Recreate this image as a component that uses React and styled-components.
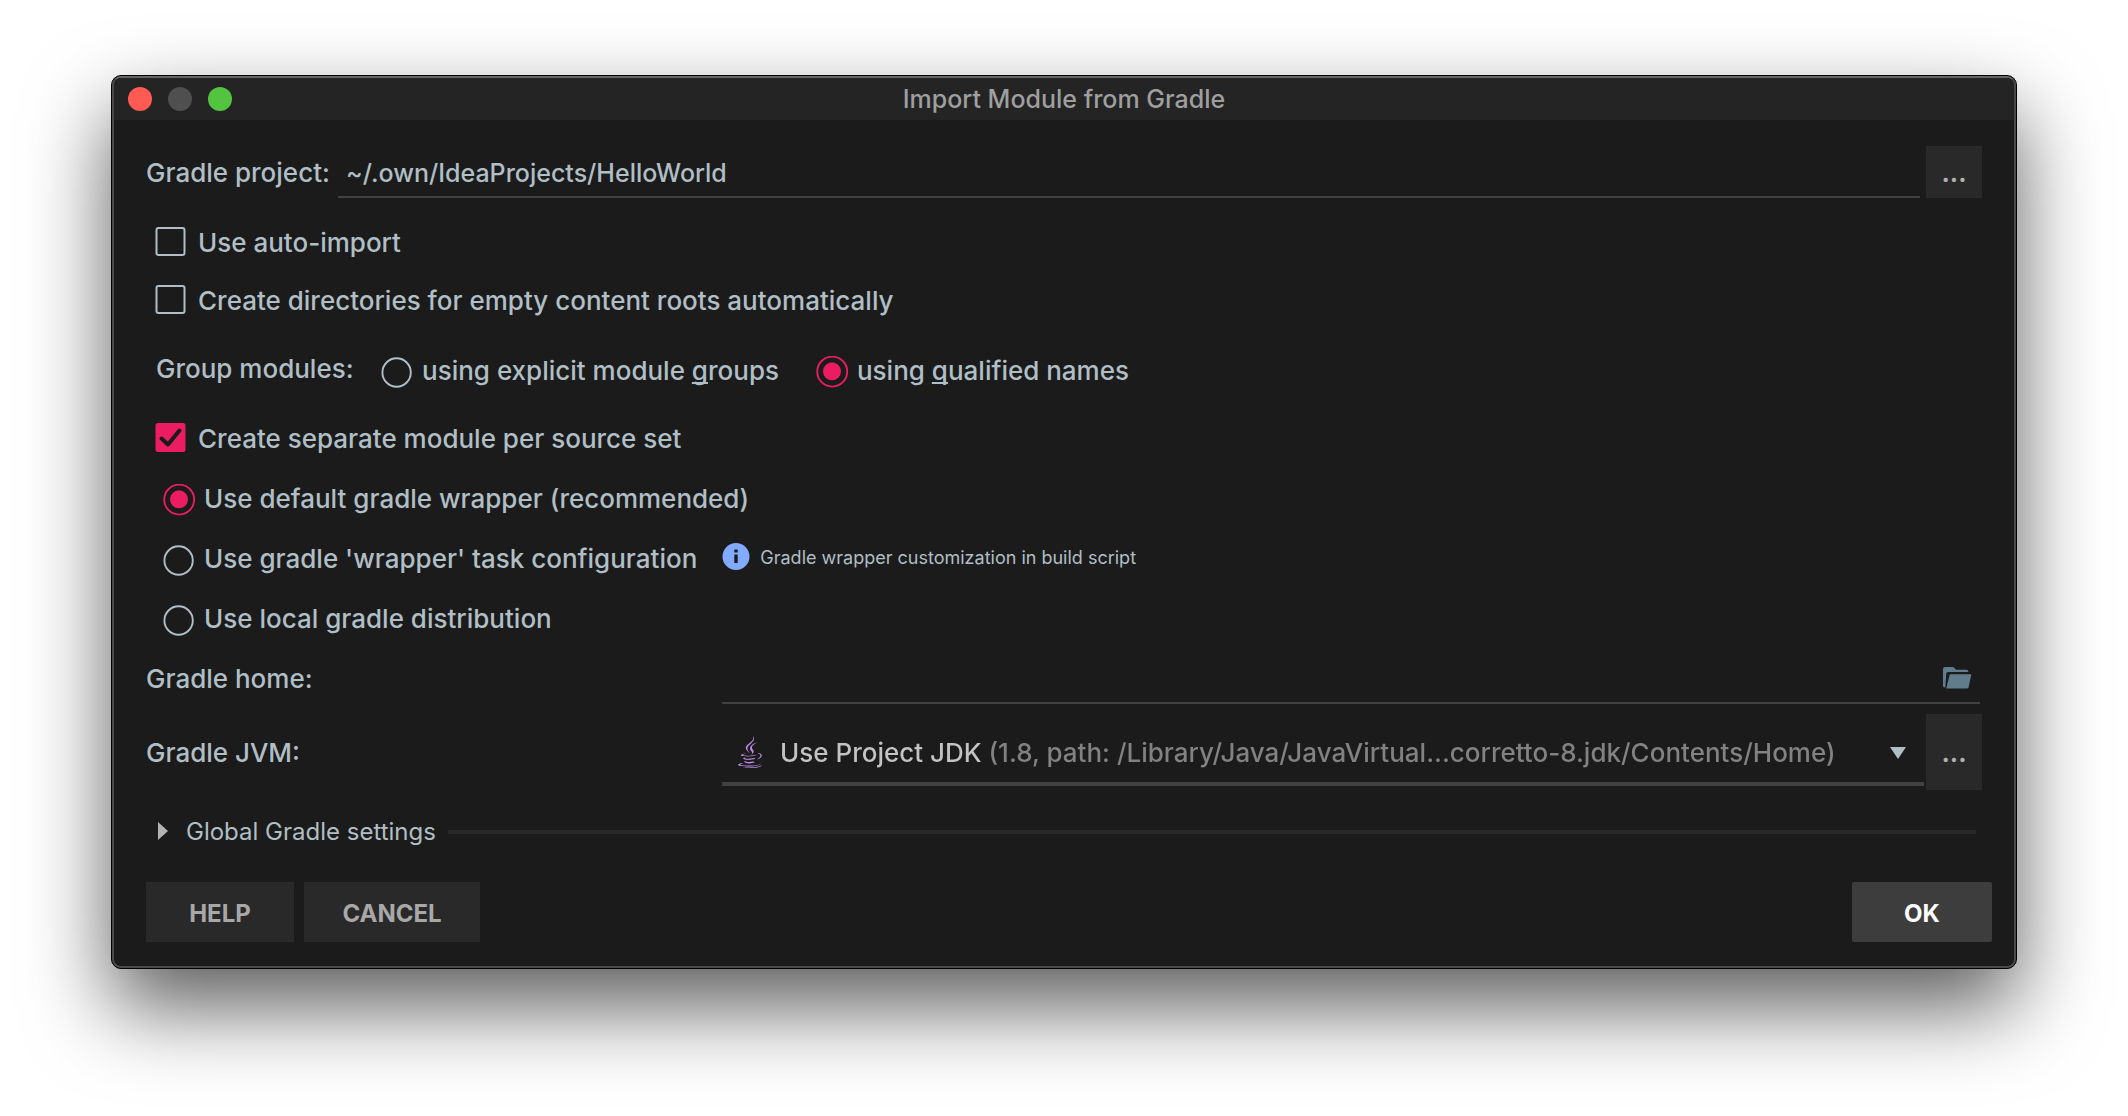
import React, { useState } from "react";
import styled, { createGlobalStyle } from "styled-components";
import { FaJava } from "react-icons/fa";

const GlobalStyle = createGlobalStyle`
  *, *::before, *::after { box-sizing: border-box; }
  body {
    margin: 0;
    background: #ffffff;
    color: #b0bec5;
    font: 500 26px/32px Inter, Roboto, sans-serif;
  }
  button, input, select { font: inherit; color: inherit; margin: 0; }
  u {
    text-decoration-skip-ink: none;
    text-decoration-thickness: 2px;
    text-underline-offset: 2px;
  }
`;

const Page = styled.div`
  padding: 75px 111px 147px;
`;

const Dialog = styled.main`
  border: 1px solid #000000;
  border-radius: 10px;
  background: #1b1b1b;
  box-shadow: 0 38px 84px rgba(0, 0, 0, 0.64);
`;

const Bezel = styled.div`
  border: 2px solid #4a4a4a;
  border-top-color: #646664;
  border-radius: 9px;
  overflow: hidden;
`;

const TitleBar = styled.header`
  display: grid;
  grid-template-columns: 1fr auto 1fr;
  align-items: center;
  height: 42px;
  padding: 0 14px;
  background: #242424;
`;

const TrafficLights = styled.div`
  display: flex;
  gap: 16px;
`;

const Light = styled.button`
  width: 24px;
  height: 24px;
  padding: 0;
  border: 0;
  border-radius: 50%;
  background: ${(p) => p.$color};
`;

const Title = styled.h1`
  margin: 0;
  font-size: 25px;
  font-weight: 500;
  color: #9f9f9f;
`;

const Body = styled.form`
  padding: 26px 22px 24px 32px;
`;

const Fields = styled.div`
  display: flex;
  flex-direction: column;
  padding-right: 10px;
`;

const Row = styled.div`
  display: flex;
  align-items: center;
  margin-top: ${(p) => p.$above || 0}px;
  padding-left: ${(p) => p.$indent || 0}px;
`;

const SplitRow = styled.div`
  display: grid;
  grid-template-columns: 576px 1fr;
  align-items: center;
  margin-top: ${(p) => p.$above}px;
`;

const FieldLabel = styled.label`
  flex: none;
  width: ${(p) => (p.$width ? `${p.$width}px` : "auto")};
  padding-top: 2px;
`;

const TextInput = styled.input`
  flex: 1;
  min-width: 0;
  height: 52px;
  padding: 4px 8px 0;
  border: 0;
  border-bottom: 2px solid #414141;
  border-radius: 0;
  background: transparent;
  outline: 0;
  font-size: 25px;
`;

const BrowseButton = styled.button`
  flex: none;
  align-self: stretch;
  width: 56px;
  margin-left: ${(p) => p.$gap}px;
  padding: 2px 0 0;
  border: 0;
  background: #292929;
  color: #b0b0b0;
  font-size: 25px;
  font-weight: 700;
`;

const PathField = styled.div`
  display: flex;
  align-items: center;
  height: 52px;
  margin-right: 2px;
  padding: 2px 8px 0 0;
  border-bottom: 2px solid #414141;
`;

const BareInput = styled.input`
  flex: 1;
  min-width: 0;
  padding: 0 8px;
  border: 0;
  background: transparent;
  outline: 0;
`;

const IconButton = styled.button`
  display: flex;
  padding: 0;
  border: 0;
  background: none;
`;

const Option = styled.label`
  display: flex;
  align-items: center;
  gap: ${(p) => p.$gap}px;
  height: 32px;
`;

const CheckboxText = styled.span`
  padding-top: 2px;
`;

const RadioText = styled.span`
  padding-bottom: 2px;
`;

const Mark = styled.span`
  display: grid;
  flex: none;
  > * { grid-area: 1 / 1; }
  svg { pointer-events: none; }
`;

const HiddenControl = styled.input`
  appearance: none;
  width: 32px;
  height: 32px;
  outline: 0;
`;

const GroupRow = styled(Row)`
  gap: 37px;
`;

const GroupLabel = styled.span`
  width: 188px;
  padding-bottom: 6px;
  white-space: nowrap;
`;

const Hint = styled.p`
  display: flex;
  align-items: center;
  gap: 10px;
  margin: 0 0 0 25px;
  padding-bottom: 4px;
  font-size: 18px;
  font-weight: 400;
`;

const JvmRow = styled.div`
  display: flex;
  height: 76px;
`;

const JvmCombo = styled.div`
  display: grid;
  flex: 1;
  grid-template-columns: 58px 1fr 34px;
  align-items: center;
  height: 72px;
  padding-top: 8px;
  border-bottom: 4px solid #414141;
  > svg { grid-row: 1; pointer-events: none; }
  > svg:first-child { grid-column: 1; margin-left: 12px; }
  > svg:last-child { grid-column: 3; }
`;

const JvmSelect = styled.select`
  grid-area: 1 / 1 / 2 / 4;
  width: 100%;
  height: 60px;
  padding: 2px 40px 0 58px;
  border: 0;
  appearance: none;
  outline: 0;
  background: linear-gradient(90deg, #c3c3c3 261px, #828282 261px);
  background-clip: text;
  -webkit-text-fill-color: transparent;
`;

const Disclosure = styled.button`
  display: flex;
  align-items: center;
  gap: 18px;
  padding: 0;
  border: 0;
  background: none;
  font-size: 24px;
  font-weight: 400;
`;

const Rule = styled.hr`
  flex: 1;
  height: 4px;
  margin: 0 6px 0 12px;
  border: 0;
  background: #292929;
`;

const Footer = styled.footer`
  display: flex;
  gap: 10px;
  margin-top: 34px;
`;

const ActionButton = styled.button`
  width: ${(p) => p.$width}px;
  height: 60px;
  margin-left: ${(p) => (p.$primary ? "auto" : 0)};
  padding: 4px 0 0;
  border: 0;
  border-radius: ${(p) => (p.$primary ? 2 : 0)}px;
  background: ${(p) => (p.$primary ? "#3d3d3d" : "#292929")};
  color: ${(p) => (p.$primary ? "#ffffff" : "#a8a8a8")};
  font-size: 24px;
  font-weight: 700;
`;

function Checkbox({ checked, onChange, children }) {
  return (
    <Option $gap={11}>
      <Mark>
        <HiddenControl type="checkbox" checked={checked} onChange={(e) => onChange(e.target.checked)} />
        <svg width="32" height="32" viewBox="0 0 32 32" aria-hidden="true">
          {checked ? (
            <>
              <rect x="0.5" y="1" width="30" height="29" rx="2.5" fill="#ec1c63" />
              <path d="M6.5 16.5 13 22.5 24.5 8.5" fill="none" stroke="#1b1b1b" strokeWidth="4" strokeLinecap="round" strokeLinejoin="round" />
            </>
          ) : (
            <rect x="1.5" y="2" width="28" height="27" rx="2" fill="none" stroke="#b0bec5" strokeWidth="2" />
          )}
        </svg>
      </Mark>
      <CheckboxText>{children}</CheckboxText>
    </Option>
  );
}

function Radio({ name, checked, onSelect, children }) {
  return (
    <Option $gap={9}>
      <Mark>
        <HiddenControl type="radio" name={name} checked={checked} onChange={onSelect} />
        <svg width="32" height="32" viewBox="0 0 32 32" aria-hidden="true">
          {checked ? (
            <>
              <circle cx="16.2" cy="15.6" r="15" fill="none" stroke="#ec1c63" strokeWidth="1.8" />
              <circle cx="16" cy="15.3" r="9" fill="#ec1c63" />
            </>
          ) : (
            <circle cx="15.6" cy="16.5" r="14.2" fill="none" stroke="#b0bec5" strokeWidth="1.9" />
          )}
        </svg>
      </Mark>
      <RadioText>{children}</RadioText>
    </Option>
  );
}

function FolderIcon() {
  return (
    <svg width="30" height="24" viewBox="0 0 30 24" aria-hidden="true">
      <path
        d="M1 3Q1 1 3 1H10.5Q11.5 1 12 1.6L14 3.8H24.5Q26.3 3.8 26.5 6H6Q4.5 6 4.3 7.5L3.3 21.5Q1 21.5 1 20Z"
        fill="#607d8b"
      />
      <path d="M7.6 9Q7.8 8.3 8.6 8.3H28.6Q29.4 8.3 29.2 9.2L26.5 21.5Q26.2 22.6 25 22.6H4.2Z" fill="#607d8b" />
    </svg>
  );
}

function InfoIcon() {
  return (
    <svg width="28" height="30" viewBox="0 0 28 30" aria-hidden="true">
      <circle cx="14" cy="13.5" r="13.5" fill="#82aaff" />
      <rect x="12.3" y="6.5" width="3.4" height="3" fill="#1b1b1b" />
      <rect x="12.3" y="11.5" width="3.4" height="8.5" fill="#1b1b1b" />
    </svg>
  );
}

export default function App() {
  const [project, setProject] = useState("~/.own/IdeaProjects/HelloWorld");
  const [home, setHome] = useState("");
  const [autoImport, setAutoImport] = useState(false);
  const [createDirs, setCreateDirs] = useState(false);
  const [perSourceSet, setPerSourceSet] = useState(true);
  const [grouping, setGrouping] = useState("qualified");
  const [distribution, setDistribution] = useState("default");

  return (
    <>
      <GlobalStyle />
      <Page>
        <Dialog>
          <Bezel>
            <TitleBar>
              <TrafficLights>
                <Light type="button" $color="#ff5b52" aria-label="Close" />
                <Light type="button" $color="#4f4f4f" aria-label="Minimize" />
                <Light type="button" $color="#53c43f" aria-label="Zoom" />
              </TrafficLights>
              <Title>Import Module from Gradle</Title>
            </TitleBar>
            <Body onSubmit={(e) => e.preventDefault()}>
              <Fields>
                <Row>
                  <FieldLabel htmlFor="project" $width={192}>Gradle project:</FieldLabel>
                  <TextInput id="project" value={project} onChange={(e) => setProject(e.target.value)} />
                  <BrowseButton type="button" $gap={6} aria-label="Browse project">...</BrowseButton>
                </Row>
                <Row $above={28} $indent={9}>
                  <Checkbox checked={autoImport} onChange={setAutoImport}>Use auto-import</Checkbox>
                </Row>
                <Row $above={26} $indent={9}>
                  <Checkbox checked={createDirs} onChange={setCreateDirs}>
                    Create directories for empty content roots automatically
                  </Checkbox>
                </Row>
                <GroupRow $above={37} $indent={10} role="radiogroup" aria-labelledby="grouping">
                  <GroupLabel id="grouping">Group modules:</GroupLabel>
                  <Radio name="grouping" checked={grouping === "explicit"} onSelect={() => setGrouping("explicit")}>
                    using explicit module <u>g</u>roups
                  </Radio>
                  <Radio name="grouping" checked={grouping === "qualified"} onSelect={() => setGrouping("qualified")}>
                    using <u>q</u>ualified names
                  </Radio>
                </GroupRow>
                <Row $above={31} $indent={9}>
                  <Checkbox checked={perSourceSet} onChange={setPerSourceSet}>Create separate module per source set</Checkbox>
                </Row>
                <Row $above={30} $indent={17}>
                  <Radio name="distribution" checked={distribution === "default"} onSelect={() => setDistribution("default")}>
                    Use default gradle wrapper (recommended)
                  </Radio>
                </Row>
                <Row $above={26} $indent={17}>
                  <Radio name="distribution" checked={distribution === "task"} onSelect={() => setDistribution("task")}>
                    Use gradle 'wrapper' task configuration
                  </Radio>
                  <Hint>
                    <InfoIcon />
                    Gradle wrapper customization in build script
                  </Hint>
                </Row>
                <Row $above={26} $indent={17}>
                  <Radio name="distribution" checked={distribution === "local"} onSelect={() => setDistribution("local")}>
                    Use local gradle distribution
                  </Radio>
                </Row>
                <SplitRow $above={16}>
                  <FieldLabel htmlFor="home">Gradle home:</FieldLabel>
                  <PathField>
                    <BareInput id="home" value={home} onChange={(e) => setHome(e.target.value)} />
                    <IconButton type="button" aria-label="Choose folder">
                      <FolderIcon />
                    </IconButton>
                  </PathField>
                </SplitRow>
                <SplitRow $above={10}>
                  <FieldLabel htmlFor="jvm">Gradle JVM:</FieldLabel>
                  <JvmRow>
                    <JvmCombo>
                      <FaJava size={32} color="#c38be8" aria-hidden="true" />
                      <JvmSelect id="jvm">
                        <option>Use Project JDK (1.8, path: /Library/Java/JavaVirtual...corretto-8.jdk/Contents/Home)</option>
                      </JvmSelect>
                      <svg width="16" height="14" viewBox="0 0 16 14" aria-hidden="true">
                        <path d="M0 2H16L8 14Z" fill="#b0bec5" />
                      </svg>
                    </JvmCombo>
                    <BrowseButton type="button" $gap={2} aria-label="Browse JVM">...</BrowseButton>
                  </JvmRow>
                </SplitRow>
                <Row $above={26} $indent={12}>
                  <Disclosure type="button" aria-expanded="false">
                    <svg width="10" height="20" viewBox="0 0 10 20" aria-hidden="true">
                      <path d="M0 0 10 9 0 18Z" fill="#b3b3b3" />
                    </svg>
                    Global Gradle settings
                  </Disclosure>
                  <Rule />
                </Row>
              </Fields>
              <Footer>
                <ActionButton type="button" $width={148}>HELP</ActionButton>
                <ActionButton type="button" $width={176}>CANCEL</ActionButton>
                <ActionButton type="submit" $width={140} $primary>OK</ActionButton>
              </Footer>
            </Body>
          </Bezel>
        </Dialog>
      </Page>
    </>
  );
}
